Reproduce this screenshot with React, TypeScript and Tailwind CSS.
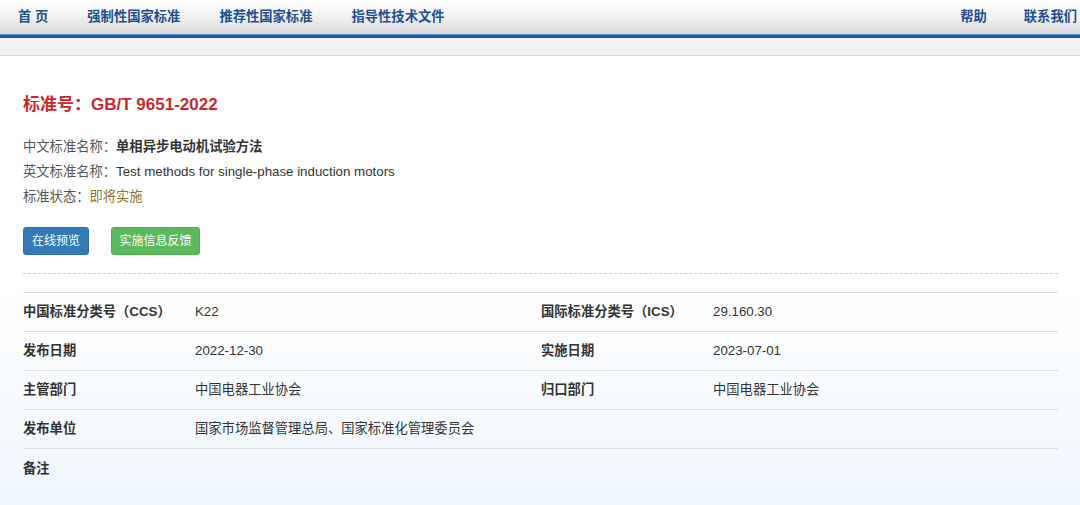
const font = { fontFamily: '"Liberation Sans", Arial, "Noto Sans CJK SC", sans-serif' };

function NavBar() {
  return (
    <div className="w-full overflow-hidden">
      <div className="w-[1100px] h-[34px] bg-gradient-to-b from-white via-[#f1f1f1] to-[#d9d9d9] flex items-center justify-between pl-[18px] pr-[23px] text-[13.3px] font-bold text-[#1f4f8f]">
        <div className="flex items-center gap-[39px]">
          <span>首 页</span>
          <span>强制性国家标准</span>
          <span>推荐性国家标准</span>
          <span>指导性技术文件</span>
        </div>
        <div className="flex items-center gap-[37px]">
          <span>帮助</span>
          <span>联系我们</span>
        </div>
      </div>
      <div className="h-[4px] bg-[#1a5ca4] border-t border-[#5b8fc6]" />
      <div className="h-[18px] bg-[#f3f3f3] border-b border-[#bfe0f6]" />
    </div>
  );
}

interface Cell {
  label: string;
  value: string;
}

function Row({ left, right, last }: { left: Cell; right?: Cell; last?: boolean }) {
  return (
    <div className={`flex h-[39px] items-center text-[13.3px] text-[#333] ${last ? "" : "border-b border-[#dddddd]"}`}>
      <div className="w-[172px] font-bold">{left.label}</div>
      <div className={right ? "w-[346px]" : "flex-1"}>{left.value}</div>
      {right && (
        <>
          <div className="w-[172px] font-bold">{right.label}</div>
          <div className="flex-1">{right.value}</div>
        </>
      )}
    </div>
  );
}

export default function App() {
  return (
    <div
      className="min-h-[505px] bg-gradient-to-b from-white via-white via-[58%] to-[#eef6fd]"
      style={font}
    >
      <NavBar />
      <div className="pl-[23px] w-[1058px] pt-[37px]">
        <h1 className="text-[17px] leading-[24px] font-bold text-[#c9282d]">标准号：GB/T 9651-2022</h1>
        <div className="mt-[17px] text-[13.3px] leading-[25px] text-[#555]">
          <div>
            中文标准名称：<span className="font-bold text-[#333]">单相异步电动机试验方法</span>
          </div>
          <div>
            英文标准名称：<span className="text-[#333]">Test methods for single-phase induction motors</span>
          </div>
          <div>
            标准状态：<span className="text-[#94722f]">即将实施</span>
          </div>
        </div>
        <div className="mt-[18px] flex gap-[22px]">
          <button className="h-[28px] w-[66px] rounded-[3px] bg-[#337ab7] border border-[#2e6da4] text-white text-[12px]">
            在线预览
          </button>
          <button className="h-[28px] w-[89px] rounded-[3px] bg-[#5cb85c] border border-[#4cae4c] text-white text-[12px]">
            实施信息反馈
          </button>
        </div>
        <div className="mt-[18px] border-t border-dashed border-[#cccccc]" />
        <div className="mt-[18px] border-t border-[#dddddd]">
          <Row left={{ label: "中国标准分类号（CCS）", value: "K22" }} right={{ label: "国际标准分类号（ICS）", value: "29.160.30" }} />
          <Row left={{ label: "发布日期", value: "2022-12-30" }} right={{ label: "实施日期", value: "2023-07-01" }} />
          <Row left={{ label: "主管部门", value: "中国电器工业协会" }} right={{ label: "归口部门", value: "中国电器工业协会" }} />
          <Row left={{ label: "发布单位", value: "国家市场监督管理总局、国家标准化管理委员会" }} />
          <Row left={{ label: "备注", value: "" }} last />
        </div>
      </div>
    </div>
  );
}
